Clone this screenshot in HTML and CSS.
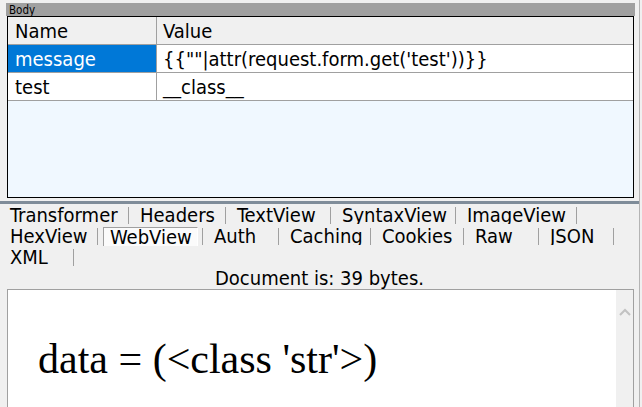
FILE: index.html
```html
<!DOCTYPE html>
<html>
<head>
<meta charset="utf-8">
<link rel="stylesheet" href="styles.css">
</head>
<body>
<div class="app">
  <section class="body-panel">
    <div class="panel-title">Body</div>
    <div class="grid">
      <div class="row head">
        <div class="cell name">Name</div>
        <div class="cell value">Value</div>
      </div>
      <div class="row">
        <div class="cell name selected">message</div>
        <div class="cell value">{{""|attr(request.form.get('test'))}}</div>
      </div>
      <div class="row">
        <div class="cell name">test</div>
        <div class="cell value">__class__</div>
      </div>
    </div>
  </section>
  <div class="splitter"></div>
  <nav class="tabs">
    <div class="tab-row">
      <div class="tab w121"><span class="label">Transformer</span></div>
      <div class="tab w97"><span class="label">Headers</span></div>
      <div class="tab w105"><span class="label">TextView</span></div>
      <div class="tab w125"><span class="label">SyntaxView</span></div>
      <div class="tab w121"><span class="label">ImageView</span></div>
    </div>
    <div class="tab-row">
      <div class="tab w90"><span class="label">HexView</span></div>
      <div class="tab w105 active"><span class="label">WebView</span></div>
      <div class="tab w76"><span class="label">Auth</span></div>
      <div class="tab w92"><span class="label">Caching</span></div>
      <div class="tab w93"><span class="label">Cookies</span></div>
      <div class="tab w75"><span class="label">Raw</span></div>
      <div class="tab w75"><span class="label">JSON</span></div>
    </div>
    <div class="tab-row">
      <div class="tab w66"><span class="label">XML</span></div>
    </div>
  </nav>
  <div class="status">Document is: 39 bytes.</div>
  <div class="doc">
    <div class="doc-content">data = (&lt;class 'str'&gt;)</div>
    <div class="scrollbar">
      <svg class="chev" width="12" height="8" viewBox="0 0 12 8"><path d="M1 7 L6 2 L11 7" fill="none" stroke="#c2c2c2" stroke-width="2"/></svg>
    </div>
  </div>
</div>
</body>
</html>
```
FILE: styles.css
```css
html, body {
  margin: 0;
  padding: 0;
  background: #f0f0f0;
}
body {
  width: 642px;
  height: 407px;
  overflow: hidden;
  font-family: "DejaVu Sans Condensed", "DejaVu Sans", sans-serif;
  font-size: 20px;
  color: #000;
}
.app {
  width: 639px;
  height: 407px;
  border-right: 1px solid #b4b4b4;
  display: flex;
  flex-direction: column;
}
.body-panel {
  padding: 3px 4px 0 6px;
}
.panel-title {
  height: 13px;
  background: #a0a0a0;
  font-size: 11.5px;
  line-height: 14px;
  padding-left: 3px;
  overflow: hidden;
}
.grid {
  margin: 0 1px;
  height: 180px;
  border: 1px solid #000;
  background: #f0f8ff;
}
.row {
  display: flex;
  height: 27px;
  border-bottom: 1px solid #a0a0a0;
  background: #fff;
}
.row.head {
  background: #f0f0f0;
}
.cell {
  line-height: 28px;
  white-space: nowrap;
  overflow: hidden;
}
.cell.name {
  width: 141px;
  padding-left: 7px;
  border-right: 1px solid #a0a0a0;
}
.cell.value {
  flex: 1;
  padding-left: 6px;
}
.cell.selected {
  background: #0078d7;
  color: #fff;
}
.splitter {
  height: 3px;
  margin-top: 3px;
  background: #7f8c99;
}
.tabs {
  padding-left: 8px;
}
.tab-row {
  display: flex;
  height: 21px;
}
.tab {
  display: flex;
  height: 21px;
  box-sizing: border-box;
}
.tab::after {
  content: "";
  flex: none;
  width: 1px;
  height: 17px;
  margin-top: 3px;
  background: #a0a0a0;
}
.tab .label {
  flex: 1;
  box-sizing: border-box;
  padding: 1px 0 0 11px;
  height: 20px;
  line-height: 20px;
  overflow: hidden;
  white-space: nowrap;
}
.tab:first-child .label {
  padding-left: 2px;
}
.tab.active .label {
  flex: none;
  width: 95px;
  margin: 2px 4px 0 5px;
  padding: 0 0 0 6px;
  height: 19px;
  line-height: 19px;
  background: #fbfbfb;
  border-left: 1px solid #a0a0a0;
  border-top: 1px solid #a0a0a0;
  border-right: 1px solid #fff;
}
.w66 { width: 66px; }
.w75 { width: 75px; }
.w76 { width: 76px; }
.w90 { width: 90px; }
.w92 { width: 92px; }
.w93 { width: 93px; }
.w97 { width: 97px; }
.w105 { width: 105px; }
.w121 { width: 121px; }
.w125 { width: 125px; }
.status {
  text-align: center;
  height: 22px;
  line-height: 22px;
}
.doc {
  flex: 1;
  display: flex;
  margin-left: 7px;
  margin-right: 5px;
  border-top: 1px solid #a0a0a0;
  border-left: 1px solid #a0a0a0;
}
.doc-content {
  flex: 1;
  background: #fff;
  font-family: "Liberation Serif", serif;
  font-size: 42px;
  padding: 45px 0 0 30px;
  white-space: nowrap;
}
.scrollbar {
  width: 17px;
  background: #f0f0f0;
  border-right: 1px solid #a0a0a0;
  display: flex;
  justify-content: center;
  padding-top: 18px;
}
.chev {
  display: block;
}
```
